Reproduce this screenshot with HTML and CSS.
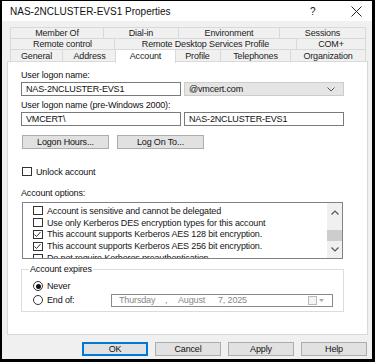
FILE: index.html
```html
<!DOCTYPE html>
<html lang="en">
<head>
    <meta charset="UTF-8">
    <meta name="viewport" content="width=device-width, initial-scale=1.0">
    <title>NAS-2NCLUSTER-EVS1 Properties</title>
    <link rel="stylesheet" href="styles.css">
</head>
<body>
    <div class="window">
        <div class="titlebar">
            <span class="title">NAS-2NCLUSTER-EVS1 Properties</span>
            <span class="help-btn">?</span>
            <span class="close-btn">
                <svg width="11" height="11" viewBox="0 0 11 11"><path d="M0.5 0.5 L10.5 10.5 M10.5 0.5 L0.5 10.5" stroke="#222" stroke-width="1"/></svg>
            </span>
        </div>

        <div class="content">
            <div class="tabs">
                <div class="tab-row row1">
                    <div class="tab">Member Of</div>
                    <div class="tab">Dial-in</div>
                    <div class="tab">Environment</div>
                    <div class="tab">Sessions</div>
                </div>
                <div class="tab-row row2">
                    <div class="tab">Remote control</div>
                    <div class="tab">Remote Desktop Services Profile</div>
                    <div class="tab">COM+</div>
                </div>
                <div class="tab-row row3">
                    <div class="tab">General</div>
                    <div class="tab">Address</div>
                    <div class="tab selected">Account</div>
                    <div class="tab">Profile</div>
                    <div class="tab">Telephones</div>
                    <div class="tab">Organization</div>
                </div>
            </div>

            <div class="panel">
                <div class="label first">User logon name:</div>
                <div class="field-row">
                    <div class="textbox">NAS-2NCLUSTER-EVS1</div>
                    <div class="combo">
                        <span>@vmcert.com</span>
                        <svg width="8" height="5" viewBox="0 0 8 5"><path d="M0.5 0.5 L4 4 L7.5 0.5" fill="none" stroke="#555" stroke-width="1"/></svg>
                    </div>
                </div>
                <div class="label second">User logon name (pre-Windows 2000):</div>
                <div class="field-row">
                    <div class="textbox">VMCERT\</div>
                    <div class="textbox">NAS-2NCLUSTER-EVS1</div>
                </div>
                <div class="btn-row">
                    <div class="button">Logon Hours...</div>
                    <div class="button">Log On To...</div>
                </div>

                <div class="check-line unlock">
                    <span class="checkbox"></span>
                    <span>Unlock account</span>
                </div>

                <div class="label options">Account options:</div>
                <div class="listbox">
                    <div class="list-items">
                        <div class="list-item"><span class="checkbox"></span>Account is sensitive and cannot be delegated</div>
                        <div class="list-item"><span class="checkbox"></span>Use only Kerberos DES encryption types for this account</div>
                        <div class="list-item"><span class="checkbox"><svg width="9" height="9" viewBox="0 0 9 9"><path d="M1.5 4.5 L3.5 6.5 L7.5 2" fill="none" stroke="#333" stroke-width="1"/></svg></span>This account supports Kerberos AES 128 bit encryption.</div>
                        <div class="list-item"><span class="checkbox"><svg width="9" height="9" viewBox="0 0 9 9"><path d="M1.5 4.5 L3.5 6.5 L7.5 2" fill="none" stroke="#333" stroke-width="1"/></svg></span>This account supports Kerberos AES 256 bit encryption.</div>
                        <div class="list-item"><span class="checkbox"></span>Do not require Kerberos preauthentication</div>
                    </div>
                    <div class="scrollbar">
                        <svg class="arrow up" width="8" height="5" viewBox="0 0 8 5"><path d="M0.5 4.5 L4 1 L7.5 4.5" fill="none" stroke="#555" stroke-width="1.2"/></svg>
                        <div class="thumb"></div>
                        <svg class="arrow down" width="8" height="5" viewBox="0 0 8 5"><path d="M0.5 0.5 L4 4 L7.5 0.5" fill="none" stroke="#555" stroke-width="1.2"/></svg>
                    </div>
                </div>

                <fieldset class="group">
                    <legend>Account expires</legend>
                    <div class="radio-line">
                        <span class="radio on"></span>
                        <span>Never</span>
                    </div>
                    <div class="radio-line">
                        <span class="radio"></span>
                        <span class="endof">End of:</span>
                        <div class="datepicker">
                            <span class="d-day">Thursday</span>
                            <span class="d-sep">,</span>
                            <span class="d-month">August</span>
                            <span class="d-date">7, 2025</span>
                            <span class="cal-icon"></span>
                            <svg width="5" height="3" viewBox="0 0 5 3"><path d="M0 0 L5 0 L2.5 3 Z" fill="#aaa"/></svg>
                        </div>
                    </div>
                </fieldset>
            </div>

            <div class="dialog-buttons">
                <div class="button default">OK</div>
                <div class="button">Cancel</div>
                <div class="button">Apply</div>
                <div class="button">Help</div>
            </div>
        </div>
    </div>
</body>
</html>
```

FILE: styles.css
```css
body {
    margin: 0;
    font-family: "Liberation Sans", Arial, sans-serif;
    font-size: 9px;
    letter-spacing: -0.15px;
    color: #111;
    background: #000;
}
.window {
    width: 375px;
    height: 362px;
    box-sizing: border-box;
    border-style: solid;
    border-color: #000;
    border-width: 1px 3px 3px 2px;
    display: flex;
    flex-direction: column;
    background: #f0f0f0;
}
.titlebar {
    height: 20px;
    background: #fff;
    display: flex;
    align-items: center;
    padding-left: 8px;
    font-size: 10px;
    letter-spacing: 0;
}
.title {
    flex: 1;
}
.help-btn {
    width: 41px;
    font-size: 10px;
}
.close-btn {
    width: 21px;
    display: flex;
}
.content {
    flex: 1;
    display: flex;
    flex-direction: column;
    padding: 6px 4px 3px 5px;
}
.tabs {
    margin: 0 2px 0 3px;
    display: flex;
    flex-direction: column;
}
.tab-row {
    display: grid;
    height: 11px;
}
.row1 { grid-template-columns: 94px 75px 101px 1fr; }
.row2 { grid-template-columns: 105px 182px 1fr; }
.row3 {
    grid-template-columns: 53px 54px 58px 46px 70px 1fr;
    height: 12px;
    align-items: end;
}
.tab {
    height: 100%;
    box-sizing: border-box;
    border: 1px solid #d9d9d9;
    border-bottom: none;
    margin-left: -1px;
    display: flex;
    align-items: center;
    justify-content: center;
    background: #f0f0f0;
    color: #222;
}
.tab:first-child {
    margin-left: 0;
}
.tab.selected {
    height: 14px;
    margin-bottom: -1px;
    margin-left: -2px;
    margin-right: -1px;
    background: #fff;
    position: relative;
    z-index: 1;
    align-items: flex-start;
    padding-top: 1px;
}
.panel {
    height: 274px;
    box-sizing: border-box;
    background: #fff;
    border: 1px solid #d9d9d9;
    padding: 0 21px 0 13px;
    display: flex;
    flex-direction: column;
}
.label {
    line-height: 11px;
    height: 11px;
}
.label.first { margin-top: 8px; margin-bottom: 1px; }
.label.second { margin-top: 4px; margin-bottom: 1px; }
.field-row {
    display: flex;
    gap: 3px;
    height: 14px;
}
.textbox, .combo {
    width: 160px;
    box-sizing: border-box;
    border: 1px solid #7a7a7a;
    padding-left: 4px;
    display: flex;
    align-items: center;
    color: #111;
}
.combo {
    background: #e5e5e5;
    border-color: #cccccc;
    justify-content: space-between;
    padding: 0 8px 0 4px;
}
.btn-row {
    display: flex;
    gap: 8px;
    margin: 9px 0 0 1px;
}
.button {
    width: 87px;
    height: 14px;
    box-sizing: border-box;
    background: #e1e1e1;
    border: 1px solid #adadad;
    display: flex;
    align-items: center;
    justify-content: center;
    color: #111;
}
.check-line {
    display: flex;
    align-items: center;
    gap: 4px;
    height: 11px;
    margin-left: 1px;
}
.check-line.unlock {
    margin-top: 17px;
}
.checkbox {
    width: 10px;
    height: 9px;
    box-sizing: border-box;
    border: 1px solid #333;
    background: #fff;
    display: inline-flex;
    flex-shrink: 0;
}
.checkbox svg {
    margin: -1px 0 0 -1px;
}
.label.options {
    margin-top: 11px;
}
.listbox {
    margin: 3px 0 0 1px;
    width: 321px;
    height: 57px;
    box-sizing: border-box;
    border: 1px solid #828282;
    display: flex;
    overflow: hidden;
    background: #fff;
}
.list-items {
    flex: 1;
    padding: 2px 0 0 10px;
    overflow: hidden;
}
.list-item {
    height: 11.8px;
    display: flex;
    align-items: center;
    gap: 4px;
    white-space: nowrap;
    color: #151515;
}
.scrollbar {
    width: 15px;
    background: #f0f0f0;
    display: flex;
    flex-direction: column;
    align-items: center;
}
.scrollbar .up {
    margin-top: 7px;
}
.thumb {
    width: 15px;
    height: 11px;
    background: #cdcdcd;
    margin-top: 15px;
}
.scrollbar .down {
    margin-top: 6px;
}
.group {
    margin: 5px 0 0 0;
    padding: 5px 0 4px 11px;
    width: 323px;
    height: 48px;
    box-sizing: border-box;
    border: 1px solid #dcdcdc;
    min-width: 0;
}
.group legend {
    padding: 0 1px;
    margin-left: -4px;
    line-height: 10px;
}
.radio-line {
    display: flex;
    align-items: center;
    height: 14px;
    gap: 4px;
}
.radio {
    width: 10px;
    height: 10px;
    box-sizing: border-box;
    border: 1px solid #333;
    border-radius: 50%;
    background: #fff;
    display: flex;
    align-items: center;
    justify-content: center;
}
.radio.on::after {
    content: "";
    width: 5px;
    height: 5px;
    border-radius: 50%;
    background: #111;
}
.endof {
    width: 60px;
}
.datepicker {
    width: 222px;
    height: 13px;
    box-sizing: border-box;
    border: 1px solid #8a8a8a;
    display: flex;
    align-items: center;
    color: #888;
    padding-left: 7px;
}
.d-day { width: 46px; }
.d-sep { width: 13px; }
.d-month { width: 40px; }
.d-date { flex: 1; }
.cal-icon {
    width: 7px;
    height: 7px;
    border: 1px solid #bbb;
    background: #f4f4f4;
    margin-right: 2px;
}
.datepicker svg {
    margin-right: 8px;
}
.dialog-buttons {
    margin-top: 7px;
    display: flex;
    justify-content: flex-end;
    gap: 7px;
    padding-right: 1px;
}
.dialog-buttons .button {
    width: 66px;
}
.button.default {
    border: 1px solid #0078d7;
    box-shadow: inset 0 0 0 1px #0078d7;
}
```
